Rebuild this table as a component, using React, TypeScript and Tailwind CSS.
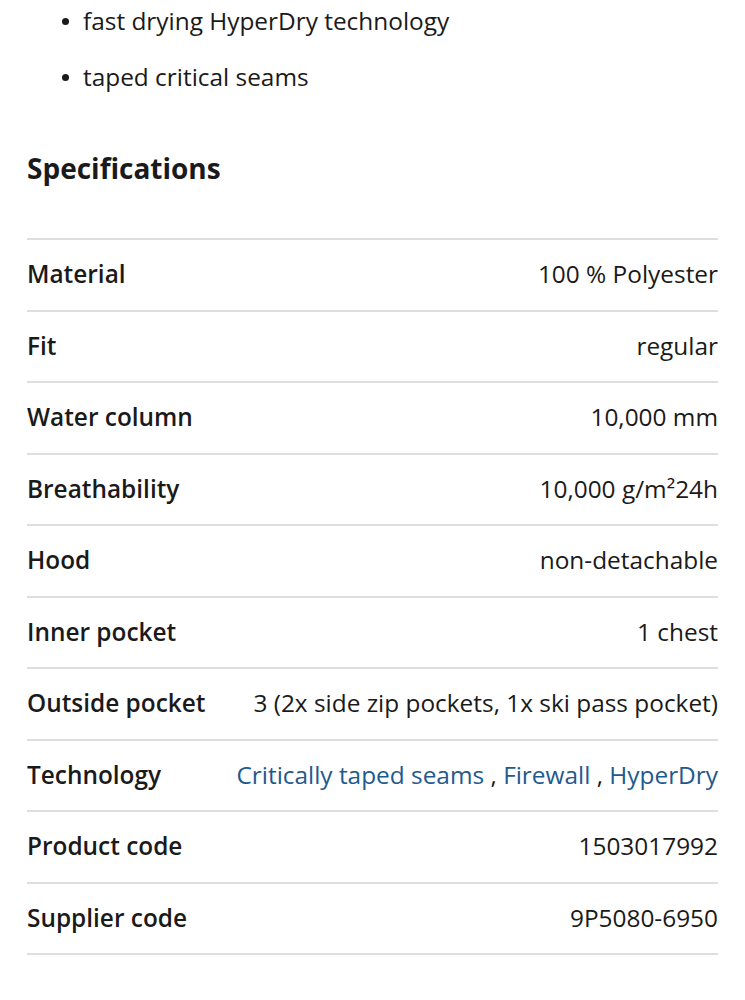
const features = ["fast drying HyperDry technology", "taped critical seams"];

const specs: { label: string; value: React.ReactNode }[] = [
  { label: "Material", value: "100 % Polyester" },
  { label: "Fit", value: "regular" },
  { label: "Water column", value: "10,000 mm" },
  { label: "Breathability", value: "10,000 g/m²24h" },
  { label: "Hood", value: "non-detachable" },
  { label: "Inner pocket", value: "1 chest" },
  { label: "Outside pocket", value: "3 (2x side zip pockets, 1x ski pass pocket)" },
  {
    label: "Technology",
    value: (
      <>
        <a href="#" className="text-[#1e5a8d]">Critically taped seams</a> ,{" "}
        <a href="#" className="text-[#1e5a8d]">Firewall</a> ,{" "}
        <a href="#" className="text-[#1e5a8d]">HyperDry</a>
      </>
    ),
  },
  { label: "Product code", value: "1503017992" },
  { label: "Supplier code", value: "9P5080-6950" },
];

export default function App() {
  return (
    <div className="min-h-screen bg-white px-[27px] text-[#1a1a1a] [font-family:'Open_Sans',sans-serif]">
      <ul className="flex flex-col gap-[14px] pl-[35px]">
        {features.map((f) => (
          <li key={f} className="flex h-[42px] items-center text-[24.4px]">
            <span className="mr-[14px] inline-block h-[7px] w-[7px] rounded-full bg-[#1a1a1a]" />
            {f}
          </li>
        ))}
      </ul>

      <h2 className="mt-[50px] text-[28px] font-bold leading-[40px]">Specifications</h2>

      <div className="mt-[50px] border-b-2 border-[#dedede]">
        {specs.map((s) => (
          <div
            key={s.label}
            className="flex h-[71.5px] items-center justify-between border-t-2 border-[#dedede] text-[24.4px]"
          >
            <span className="font-semibold">{s.label}</span>
            <span className="text-right">{s.value}</span>
          </div>
        ))}
      </div>
    </div>
  );
}
